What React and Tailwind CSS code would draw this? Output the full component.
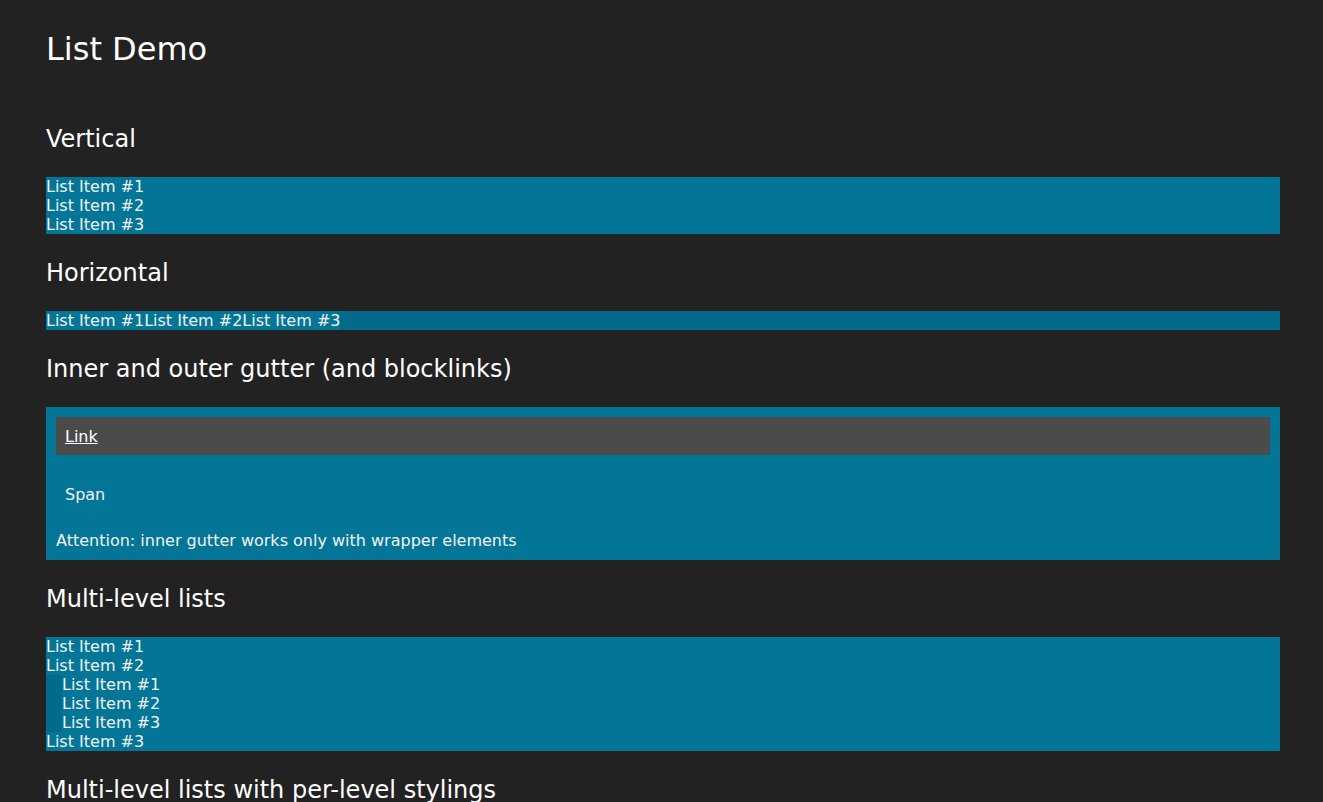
import React from "react";

const items = ["List Item #1", "List Item #2", "List Item #3"];

function Heading({ children }) {
  return (
    <h2 className="mt-[26px] mb-[23.5px] text-[24px] leading-[27.5px] font-normal text-white">
      {children}
    </h2>
  );
}

function App() {
  return (
    <div
      className="min-h-screen bg-[#222222] pl-[46px] pr-[43px] pt-[31px] pb-[40px] text-[16px] leading-[19px] text-[#f2f2f2]"
      style={{ fontFamily: '"DejaVu Sans", Verdana, sans-serif' }}
    >
      <h1 className="mb-[58px] text-[32px] leading-[37px] font-normal text-white">List Demo</h1>

      <h2 className="mb-[23.5px] text-[24px] leading-[27.5px] font-normal text-white">Vertical</h2>
      <ul className="bg-[#026b8b]">
        {items.map((item) => (
          <li key={item} className="bg-[#037698]">
            {item}
          </li>
        ))}
      </ul>

      <Heading>Horizontal</Heading>
      <ul className="flex bg-[#026b8b]">
        {items.map((item) => (
          <li key={item} className="bg-[#037698]">
            {item}
          </li>
        ))}
      </ul>

      <Heading>Inner and outer gutter (and blocklinks)</Heading>
      <div className="bg-[#037698] p-[10px]">
        <ul>
          <li>
            <a href="#" className="block bg-[#4b4b4b] px-[9px] py-[9.5px] text-white underline">
              Link
            </a>
          </li>
          <li className="mt-[20px]">
            <span className="block px-[9px] py-[9.5px]">Span</span>
          </li>
        </ul>
        <p className="mt-[18px]">Attention: inner gutter works only with wrapper elements</p>
      </div>

      <Heading>Multi-level lists</Heading>
      <ul className="bg-[#026b8b]">
        <li className="bg-[#037698]">List Item #1</li>
        <li className="bg-[#037698]">
          List Item #2
          <ul className="bg-[#026b8b] pl-[16px]">
            {items.map((item) => (
              <li key={item} className="bg-[#037698]">
                {item}
              </li>
            ))}
          </ul>
        </li>
        <li className="bg-[#037698]">List Item #3</li>
      </ul>

      <Heading>Multi-level lists with per-level stylings</Heading>
      <ul className="bg-[#026b8b]">
        <li className="bg-[#037698]">List Item #1</li>
        <li className="bg-[#037698]">
          List Item #2
          <ul className="bg-[#026b8b] pl-[16px]">
            {items.map((item) => (
              <li key={item} className="bg-[#037698]">
                {item}
              </li>
            ))}
          </ul>
        </li>
        <li className="bg-[#037698]">List Item #3</li>
      </ul>
    </div>
  );
}

export default App;
